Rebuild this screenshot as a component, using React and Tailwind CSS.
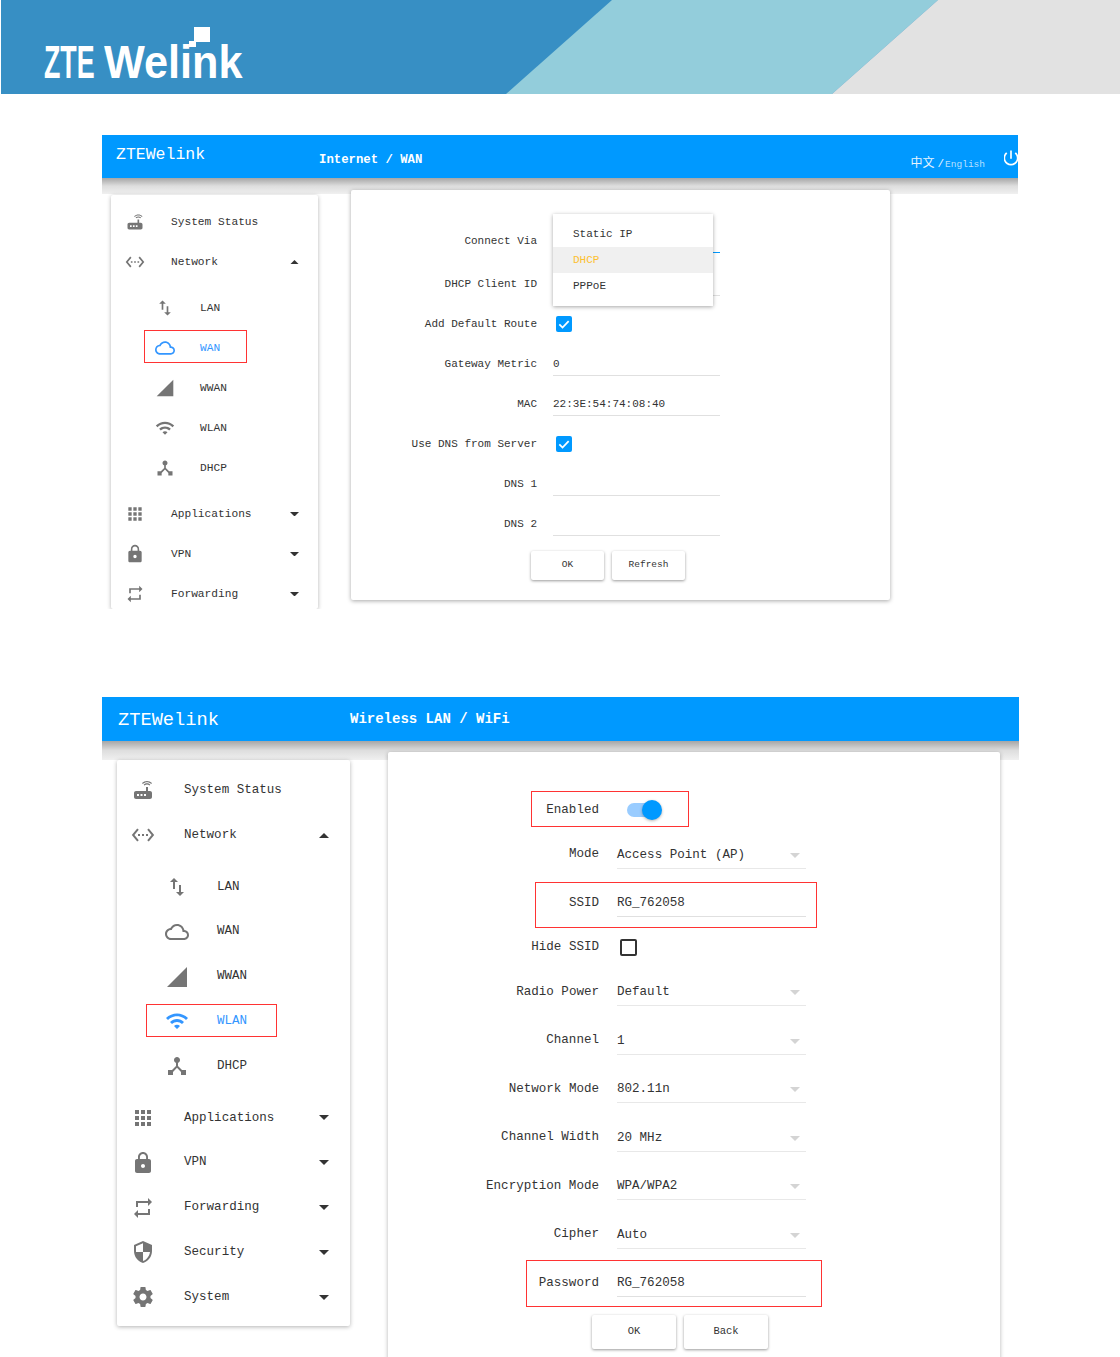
import React from 'react';

const ICONS = {
  router: 'M20.2 5.9l.8-.8C19.6 3.7 17.8 3 16 3s-3.6.7-5 2.1l.8.8C13 4.8 14.5 4.2 16 4.2s3 .6 4.2 1.7zm-.9.8c-.9-.9-2.1-1.4-3.3-1.4s-2.4.5-3.3 1.4l.8.8c.7-.7 1.6-1 2.5-1 .9 0 1.8.3 2.5 1l.8-.8zM19 13h-2V9h-2v4H5c-1.1 0-2 .9-2 2v4c0 1.1.9 2 2 2h14c1.1 0 2-.9 2-2v-4c0-1.1-.9-2-2-2zM8 18H6v-2h2v2zm3.5 0h-2v-2h2v2zm3.5 0h-2v-2h2v2z',
  ethernet: 'M7.77 6.76L6.23 5.48.82 12l5.41 6.52 1.54-1.28L3.42 12l4.35-5.24zM7 13h2v-2H7v2zm10-2h-2v2h2v-2zm-6 2h2v-2h-2v2zm6.77-7.52l-1.54 1.28L20.58 12l-4.35 5.24 1.54 1.28L23.18 12l-5.41-6.52z',
  swap: 'M16 17.01V10h-2v7.01h-3L15 21l4-3.99h-3zM9 3L5 6.99h3V14h2V6.99h3L9 3z',
  cloud: 'M19.35 10.04C18.67 6.59 15.64 4 12 4 9.11 4 6.6 5.64 5.35 8.04 2.34 8.36 0 10.91 0 14c0 3.31 2.69 6 6 6h13c2.76 0 5-2.24 5-5 0-2.64-2.05-4.78-4.65-4.96zM19 18H6c-2.21 0-4-1.79-4-4s1.79-4 4-4h.71C7.37 7.69 9.48 6 12 6c3.04 0 5.5 2.46 5.5 5.5v.5H19c1.66 0 3 1.34 3 3s-1.34 3-3 3z',
  signal: 'M2 22h20V2z',
  wifi: 'M1 9l2 2c4.97-4.97 13.03-4.97 18 0l2-2C16.93 2.93 7.08 2.93 1 9zm8 8l3 3 3-3c-1.65-1.66-4.34-1.66-6 0zm-4-4l2 2c2.76-2.76 7.24-2.76 10 0l2-2C15.14 9.14 8.87 9.14 5 13z',
  hub: 'M17 16l-4-4V8.82C14.16 8.4 15 7.3 15 6c0-1.66-1.34-3-3-3S9 4.34 9 6c0 1.3.84 2.4 2 2.82V12l-4 4H3v5h5v-3.05l4-4.2 4 4.2V21h5v-5h-4z',
  apps: 'M4 8h4V4H4v4zm6 12h4v-4h-4v4zm-6 0h4v-4H4v4zm0-6h4v-4H4v4zm6 0h4v-4h-4v4zm6-10v4h4V4h-4zm-6 4h4V4h-4v4zm6 6h4v-4h-4v4zm0 6h4v-4h-4v4z',
  lock: 'M18 8h-1V6c0-2.76-2.24-5-5-5S7 3.24 7 6v2H6c-1.1 0-2 .9-2 2v10c0 1.1.9 2 2 2h12c1.1 0 2-.9 2-2V10c0-1.1-.9-2-2-2zm-6 9c-1.1 0-2-.9-2-2s.9-2 2-2 2 .9 2 2-.9 2-2 2zm3.1-9H8.9V6c0-1.71 1.39-3.1 3.1-3.1 1.71 0 3.1 1.39 3.1 3.1v2z',
  repeat: 'M7 7h10v3l4-4-4-4v3H5v6h2V7zm10 10H7v-3l-4 4 4 4v-3h12v-6h-2v4z',
  security: 'M12 1L3 5v6c0 5.55 3.84 10.74 9 12 5.16-1.26 9-6.45 9-12V5l-9-4zm0 10.99h7c-.53 4.12-3.28 7.79-7 8.94V12H5V6.3l7-3.11v8.8z',
  settings: 'M19.43 12.98c.04-.32.07-.64.07-.98s-.03-.66-.07-.98l2.11-1.65c.19-.15.24-.42.12-.64l-2-3.46c-.12-.22-.39-.3-.61-.22l-2.49 1c-.52-.4-1.08-.73-1.69-.98l-.38-2.65C14.46 2.18 14.25 2 14 2h-4c-.25 0-.46.18-.49.42l-.38 2.65c-.61.25-1.17.59-1.69.98l-2.49-1c-.23-.09-.49 0-.61.22l-2 3.46c-.13.22-.07.49.12.64l2.11 1.65c-.04.32-.07.65-.07.98s.03.66.07.98l-2.11 1.65c-.19.15-.24.42-.12.64l2 3.46c.12.22.39.3.61.22l2.49-1c.52.4 1.08.73 1.69.98l.38 2.65c.03.24.24.42.49.42h4c.25 0 .46-.18.49-.42l.38-2.65c.61-.25 1.17-.59 1.69-.98l2.49 1c.23.09.49 0 .61-.22l2-3.46c.12-.22.07-.49-.12-.64l-2.11-1.65zM12 15.5c-1.93 0-3.5-1.57-3.5-3.5s1.57-3.5 3.5-3.5 3.5 1.57 3.5 3.5-1.57 3.5-3.5 3.5z',
  power: 'M13 3h-2v10h2V3zm4.83 2.17l-1.42 1.42C17.99 7.86 19 9.81 19 12c0 3.87-3.13 7-7 7s-7-3.13-7-7c0-2.19 1.01-4.14 2.58-5.42L6.17 5.17C4.23 6.82 3 9.26 3 12c0 4.97 4.03 9 9 9s9-4.03 9-9c0-2.74-1.23-5.18-3.17-6.83z',
};

const Icon = ({ name, className }) => (
  <svg viewBox="0 0 24 24" fill="currentColor" className={className}>
    <path d={ICONS[name]} />
  </svg>
);

const Caret = ({ up, className }) => (
  <svg viewBox="0 0 10 5" fill="currentColor" className={className}>
    <path d={up ? 'M0 5l5-5 5 5z' : 'M0 0l5 5 5-5z'} />
  </svg>
);

const MENU = [
  { icon: 'router', label: 'System Status' },
  { icon: 'ethernet', label: 'Network', caret: 'up' },
  { icon: 'swap', label: 'LAN', sub: true, first: true },
  { icon: 'cloud', label: 'WAN', sub: true },
  { icon: 'signal', label: 'WWAN', sub: true },
  { icon: 'wifi', label: 'WLAN', sub: true },
  { icon: 'hub', label: 'DHCP', sub: true, last: true },
  { icon: 'apps', label: 'Applications', caret: 'down' },
  { icon: 'lock', label: 'VPN', caret: 'down' },
  { icon: 'repeat', label: 'Forwarding', caret: 'down' },
  { icon: 'security', label: 'Security', caret: 'down' },
  { icon: 'settings', label: 'System', caret: 'down' },
];

const SMALL = {
  wrap: 'ml-[9px] mt-[5px] w-[207px] h-[414px] pt-[7px] text-[11.2px]',
  row: 'h-[40px] pr-[19px]',
  top: 'pl-[14px]',
  sub: 'pl-[44px]',
  first: 'mt-[6px]',
  last: 'mb-[6px]',
  icon: 'w-5 h-5',
  textTop: 'ml-[26px]',
  textSub: 'ml-[25px]',
  caret: 'w-[9px] h-[4.5px]',
  box: 'left-[33px] top-[2px] w-[103px] h-[33px]',
};

const LARGE = {
  wrap: 'ml-[15px] mt-[8px] w-[233px] h-[566px] pt-[8px] text-[12.55px]',
  row: 'h-[44.8px] pr-[21px]',
  top: 'pl-[14px]',
  sub: 'pl-[48px]',
  first: 'mt-[7px]',
  last: 'mb-[7px]',
  icon: 'w-6 h-6',
  textTop: 'ml-[29px]',
  textSub: 'ml-[28px]',
  caret: 'w-[10px] h-[5px]',
  box: 'left-[29px] top-[5px] w-[131px] h-[33px]',
};

const Sidebar = ({ size, active, items }) => (
  <div className={`shrink-0 bg-white rounded-[2px] shadow-[0_1px_4px_rgba(0,0,0,0.3)] overflow-hidden ${size.wrap}`}>
    {items.map((item) => {
      const on = item.label === active;
      return (
        <div
          key={item.label}
          className={`relative flex items-center ${size.row} ${item.sub ? size.sub : size.top} ${item.first ? size.first : ''} ${item.last ? size.last : ''} ${on ? 'text-[#3396ff]' : 'text-[#333]'}`}
        >
          <Icon name={item.icon} className={`${size.icon} shrink-0 ${on ? 'text-[#3396ff]' : 'text-[#757575]'}`} />
          <span className={item.sub ? size.textSub : size.textTop}>{item.label}</span>
          {item.caret && <Caret up={item.caret === 'up'} className={`ml-auto text-[#333] ${size.caret}`} />}
          {on && <div className={`absolute border border-[#ff3333] ${size.box}`} />}
        </div>
      );
    })}
  </div>
);

const TopBar = ({ tall, brand, title, children }) => (
  <>
    <div className={`flex bg-[#0099ff] text-white ${tall ? 'h-[44px]' : 'h-[43px]'}`}>
      <span className={tall ? 'ml-[16px] mt-[9px] w-[232px] text-[18.7px] leading-[28px]' : 'ml-[14px] mt-[7px] w-[203px] text-[16.5px] leading-[26px]'}>{brand}</span>
      <span className={tall ? 'text-[14px] leading-[44px] font-bold' : 'text-[12.3px] leading-[50px] font-bold'}>{title}</span>
      {children}
    </div>
    <div className={`bg-gradient-to-b from-[#a6a6a6] via-[#dedede] to-[#f0f0f0] ${tall ? 'h-[19px]' : 'h-[16px]'}`} />
  </>
);

const Check = () => (
  <div className="flex items-center justify-center w-[16px] h-[16px] rounded-[2px] bg-[#0099ff]">
    <svg viewBox="0 0 24 24" className="w-[14px] h-[14px]" fill="none" stroke="white" strokeWidth="3">
      <path d="M4 12.5l5.5 5.5L20 7" />
    </svg>
  </div>
);

// first form: label column, then an underlined field
const WanRow = ({ label, children, className = '' }) => (
  <div className={`flex items-center h-[40px] ${className}`}>
    <span className="w-[186px] text-right">{label}</span>
    <div className="ml-[16px] w-[167px]">{children}</div>
  </div>
);

const WanField = ({ value, line = 'border-[#e0e0e0]', children }) => (
  <div className={`relative h-[24px] leading-[24px] border-b ${line}`}>
    {value}
    {children}
  </div>
);

const Wan = () => (
  <section className="ml-[102px] mt-[41px] w-[916px] h-[474px] overflow-hidden">
    <TopBar brand="ZTEWelink" title="Internet / WAN">
      <div className="ml-auto flex items-baseline pt-[18px] text-[#e8f5ff]">
        <span className="text-[12px] leading-[17px] font-['Noto_Sans_CJK_SC',sans-serif]">中文</span>
        <span className="ml-[3px] text-[11px]">/</span>
        <span className="ml-[1px] text-[9.5px] text-[#b8e0ff]">English</span>
      </div>
      <div className="ml-[19px] w-[14px] overflow-hidden pt-[13px]">
        <Icon name="power" className="w-[20px] h-[20px] -ml-[3px] max-w-none" />
      </div>
    </TopBar>
    <div className="relative -mt-[4px] flex items-start">
      <Sidebar size={SMALL} active="WAN" items={MENU.slice(0, 10)} />
      <div className="ml-[33px] w-[539px] h-[410px] pt-[31px] bg-white rounded-[2px] shadow-[0_1px_4px_rgba(0,0,0,0.35)] text-[11px] text-[#333]">
        <WanRow label="Connect Via" className="mb-[3px]">
          <WanField line="border-[#0099ff]">
            <div className="absolute left-0 -top-[15px] w-[160px] h-[92px] pt-[7px] bg-white shadow-[0_1px_4px_rgba(0,0,0,0.35)] z-10">
              <div className="h-[26px] pl-[20px] leading-[26px]">Static IP</div>
              <div className="h-[26px] pl-[20px] leading-[26px] bg-[#f0f0f0] text-[#fdc02f]">DHCP</div>
              <div className="h-[26px] pl-[20px] leading-[26px]">PPPoE</div>
            </div>
          </WanField>
        </WanRow>
        <WanRow label="DHCP Client ID"><WanField /></WanRow>
        <WanRow label="Add Default Route"><div className="pl-[3px]"><Check /></div></WanRow>
        <WanRow label="Gateway Metric"><WanField value="0" /></WanRow>
        <WanRow label="MAC"><WanField value="22:3E:54:74:08:40" /></WanRow>
        <WanRow label="Use DNS from Server"><div className="pl-[3px]"><Check /></div></WanRow>
        <WanRow label="DNS 1"><WanField /></WanRow>
        <WanRow label="DNS 2"><WanField /></WanRow>
        <div className="flex gap-[8px] ml-[180px] mt-[7px] text-[9.5px]">
          <button className="w-[73px] h-[29px] rounded-[2px] bg-white shadow-[0_1px_3px_rgba(0,0,0,0.4)]">OK</button>
          <button className="w-[73px] h-[29px] rounded-[2px] bg-white shadow-[0_1px_3px_rgba(0,0,0,0.4)]">Refresh</button>
        </div>
      </div>
    </div>
  </section>
);

// second form, same idea with bigger rows
const WifiRow = ({ label, tall = true, box, children }) => (
  <div className={`relative flex items-center ${tall ? 'h-[48.5px]' : 'h-[40.5px]'}`}>
    <span className="w-[211px] text-right">{label}</span>
    <div className="ml-[18px] w-[189px]">{children}</div>
    {box && <div className={`absolute border border-[#ff3333] ${box}`} />}
  </div>
);

const WifiField = ({ value, select }) => (
  <div className={`relative h-[28px] leading-[28px] border-b ${select ? 'border-[#e8e8e8]' : 'border-[#e0e0e0]'}`}>
    {value}
    {select && <Caret className="absolute right-[6px] top-[12px] w-[10px] h-[5px] text-[#d4d4d4]" />}
  </div>
);

const Wifi = () => (
  <section className="ml-[102px] mt-[88px] w-[917px] h-[660px] overflow-hidden">
    <TopBar tall brand="ZTEWelink" title="Wireless LAN / WiFi" />
    <div className="relative -mt-[8px] flex items-start">
      <Sidebar size={LARGE} active="WLAN" items={MENU} />
      <div className="ml-[38px] w-[612px] h-[640px] pt-[38px] bg-white rounded-[2px] shadow-[0_1px_4px_rgba(0,0,0,0.3)] text-[12.55px] text-[#333]">
        <WifiRow label="Enabled" tall={false} box="left-[143px] top-[1px] w-[158px] h-[36px]">
          <div className="relative w-[30px] h-[14px] ml-[10px] rounded-full bg-[#99ccff]">
            <div className="absolute right-[-5px] -top-[3px] w-[20px] h-[20px] rounded-full bg-[#0099ff] shadow-[0_1px_3px_rgba(0,0,0,0.3)]" />
          </div>
        </WifiRow>
        <WifiRow label="Mode"><WifiField value="Access Point (AP)" select /></WifiRow>
        <WifiRow label="SSID" box="left-[147px] top-[2.5px] w-[282px] h-[46px]"><WifiField value="RG_762058" /></WifiRow>
        <WifiRow label="Hide SSID" tall={false}>
          <div className="ml-[3px] w-[17px] h-[17px] rounded-[2px] border-2 border-[#333]" />
        </WifiRow>
        <WifiRow label="Radio Power"><WifiField value="Default" select /></WifiRow>
        <WifiRow label="Channel"><WifiField value="1" select /></WifiRow>
        <WifiRow label="Network Mode"><WifiField value="802.11n" select /></WifiRow>
        <WifiRow label="Channel Width"><WifiField value="20 MHz" select /></WifiRow>
        <WifiRow label="Encryption Mode"><WifiField value="WPA/WPA2" select /></WifiRow>
        <WifiRow label="Cipher"><WifiField value="Auto" select /></WifiRow>
        <WifiRow label="Password" box="left-[138px] top-[1px] w-[296px] h-[47px]"><WifiField value="RG_762058" /></WifiRow>
        <div className="flex gap-[8px] ml-[204px] mt-[7px] text-[10.5px]">
          <button className="w-[84px] h-[34px] rounded-[2px] bg-white shadow-[0_1px_3px_rgba(0,0,0,0.4)]">OK</button>
          <button className="w-[84px] h-[34px] rounded-[2px] bg-white shadow-[0_1px_3px_rgba(0,0,0,0.4)]">Back</button>
        </div>
      </div>
    </div>
  </section>
);

const App = () => (
  <div className="w-[1120px] h-[1357px] overflow-hidden bg-white font-['Liberation_Mono',monospace]">
    <header className="relative h-[94px] border-l border-white bg-[#378fc4] overflow-hidden">
      <svg viewBox="1 0 1119 94" className="absolute inset-0 w-full h-full">
        <path d="M506 94L612 0H938L832 94z" fill="#93cddb" />
        <path d="M832 94L938 0H1120V94z" fill="#e2e2e2" />
      </svg>
      <div className="relative flex pl-[43px] pt-[38px] text-white text-[47px] leading-none font-bold font-['Liberation_Sans',sans-serif]">
        <div className="w-[51px]"><span className="inline-block origin-left scale-x-[0.57]">ZTE</span></div>
        <div className="ml-[9px] w-[139px]"><span className="inline-block origin-left scale-x-[0.92]">Welink</span></div>
        <div className="absolute left-[193px] top-[27px] w-[16px] h-[15px] bg-white" />
        <div className="absolute left-[188px] top-[41px] w-[7px] h-[6px] bg-white" />
      </div>
    </header>
    <Wan />
    <Wifi />
  </div>
);

export default App;
